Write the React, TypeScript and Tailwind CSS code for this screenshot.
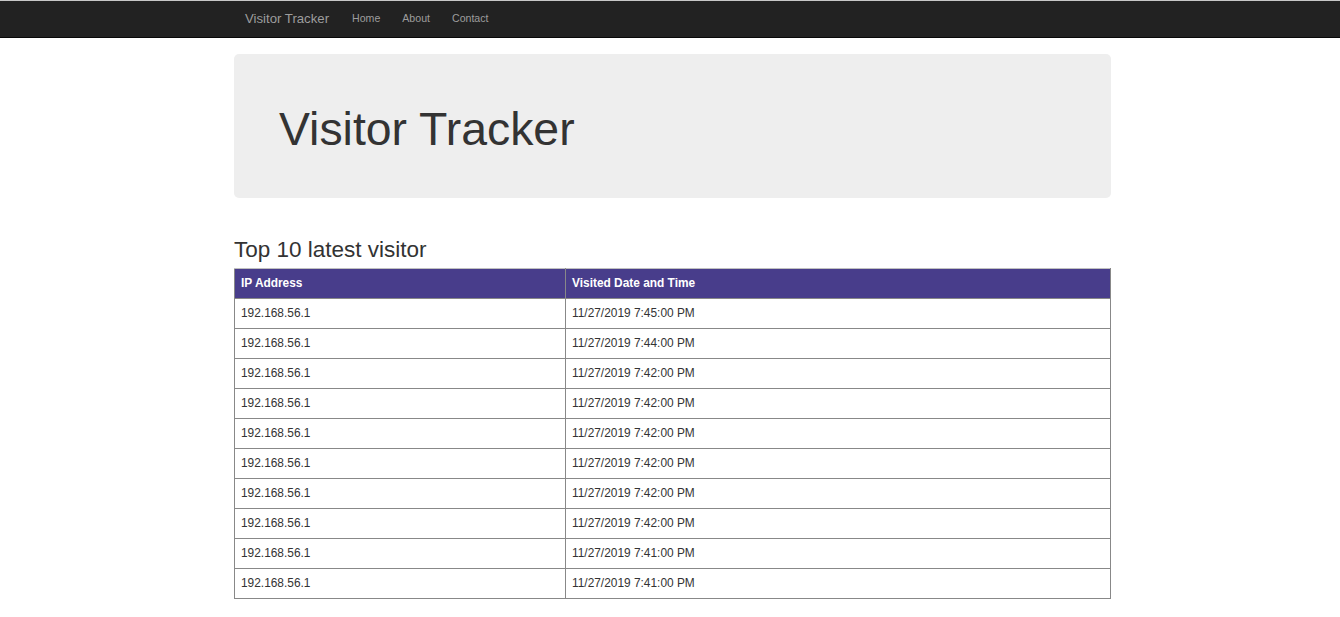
import React from "react";

const rows = [
  "11/27/2019 7:45:00 PM",
  "11/27/2019 7:44:00 PM",
  "11/27/2019 7:42:00 PM",
  "11/27/2019 7:42:00 PM",
  "11/27/2019 7:42:00 PM",
  "11/27/2019 7:42:00 PM",
  "11/27/2019 7:42:00 PM",
  "11/27/2019 7:42:00 PM",
  "11/27/2019 7:41:00 PM",
  "11/27/2019 7:41:00 PM",
];

export default function App() {
  return (
    <div className="min-h-[617px] bg-white text-[#333]" style={{ fontFamily: '"Liberation Sans", Arial, sans-serif' }}>
      <div className="border-t border-[#c8c8c8] border-b border-b-[#080808] bg-[#222]">
        <div className="ml-[234px] w-[877px] h-[36px] flex items-center">
          <span className="ml-[11px] text-[13.2px] text-[#9d9d9d]">Visitor Tracker</span>
          <nav className="ml-[12px] flex">
            <span className="px-[11px] text-[10.6px] text-[#9d9d9d]">Home</span>
            <span className="px-[11px] text-[10.6px] text-[#9d9d9d]">About</span>
            <span className="px-[11px] text-[10.6px] text-[#9d9d9d]">Contact</span>
          </nav>
        </div>
      </div>
      <div className="ml-[234px] w-[877px]">
        <div className="mt-[16px] h-[144px] rounded-[5px] bg-[#eee] pl-[45px] flex items-center">
          <h1 className="text-[46.4px] leading-none text-[#333] pt-[6px]">Visitor Tracker</h1>
        </div>
        <h2 className="mt-[39px] text-[22.5px] leading-[26px] text-[#333]">Top 10 latest visitor</h2>
        <table className="mt-[5px] w-[877px] border-collapse text-[11.9px]">
          <thead>
            <tr className="h-[30px] bg-[#483d8b] text-white">
              <th className="w-[331px] border border-[#888] border-t-[#c0c0c0] px-[6px] text-left font-bold">IP Address</th>
              <th className="border border-[#888] border-t-[#c0c0c0] px-[6px] text-left font-bold">Visited Date and Time</th>
            </tr>
          </thead>
          <tbody>
            {rows.map((r, i) => (
              <tr key={i} className="h-[30px]">
                <td className="border border-[#888] px-[6px] text-[#333]">192.168.56.1</td>
                <td className="border border-[#888] px-[6px] text-[#333]">{r}</td>
              </tr>
            ))}
          </tbody>
        </table>
      </div>
    </div>
  );
}
